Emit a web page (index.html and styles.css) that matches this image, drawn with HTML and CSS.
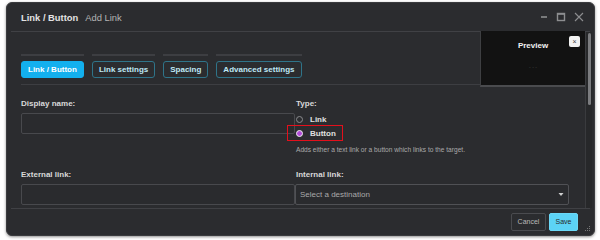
FILE: index.html
```html
<!DOCTYPE html>
<html>
<head>
<meta charset="utf-8">
<link rel="stylesheet" href="styles.css">
</head>
<body>
<div class="dialog">
  <div class="header">
    <span class="title">Link / Button</span>
    <span class="subtitle">Add Link</span>
    <div class="controls">
      <svg width="8" height="10" viewBox="0 0 8 10"><line x1="1" y1="5" x2="7" y2="5" stroke="#8d8e90" stroke-width="1.6"/></svg>
      <svg width="10" height="10" viewBox="0 0 10 10"><rect x="1.5" y="1.5" width="7" height="7" fill="none" stroke="#8d8e90" stroke-width="1.4"/><line x1="1.5" y1="2" x2="8.5" y2="2" stroke="#8d8e90" stroke-width="1.6"/></svg>
      <svg width="10" height="10" viewBox="0 0 10 10"><path d="M1 1 L9 9 M9 1 L1 9" stroke="#8d8e90" stroke-width="1.1"/></svg>
    </div>
  </div>
  <div class="body">
    <div class="scroll">
      <div class="tabs">
        <div class="tab-item"><span class="tab active">Link / Button</span></div>
        <div class="tab-item"><span class="tab">Link settings</span></div>
        <div class="tab-item"><span class="tab">Spacing</span></div>
        <div class="tab-item"><span class="tab">Advanced settings</span></div>
      </div>
      <div class="form">
        <div class="field">
          <div class="label">Display name:</div>
          <div class="input"></div>
        </div>
        <div class="field col2">
          <div class="label">Type:</div>
          <div class="radio-row"><span class="radio"></span><span class="radio-label">Link</span></div>
          <div class="radio-row sel"><span class="radio on"></span><span class="radio-label">Button</span><span class="mark"></span></div>
          <div class="help">Adds either a text link or a button which links to the target.</div>
        </div>
        <div class="field">
          <div class="label">External link:</div>
          <div class="input"></div>
        </div>
        <div class="field col2">
          <div class="label">Internal link:</div>
          <div class="select"><span>Select a destination</span><svg width="6" height="5" viewBox="0 0 6 5"><path d="M0.5 1 L5.5 1 L3 4 Z" fill="#d0d0d0"/></svg></div>
        </div>
      </div>
      <div class="preview">
        <div class="preview-title">Preview</div>
        <span class="preview-close">×</span>
        <div class="preview-dash">- - -</div>
      </div>
    </div>
    <div class="scrollbar"><div class="thumb"></div></div>
  </div>
  <div class="footer">
    <span class="btn cancel">Cancel</span>
    <span class="btn save">Save</span>
    <svg class="grip" width="6" height="6" viewBox="0 0 6 6"><rect x="4" y="0" width="1" height="1" fill="#777"/><rect x="2" y="2" width="1" height="1" fill="#777"/><rect x="4" y="2" width="1" height="1" fill="#777"/><rect x="0" y="4" width="1" height="1" fill="#777"/><rect x="2" y="4" width="1" height="1" fill="#777"/><rect x="4" y="4" width="1" height="1" fill="#777"/></svg>
  </div>
</div>
</body>
</html>
```

FILE: styles.css
```css
* { box-sizing: border-box; }
html, body { margin: 0; padding: 0; background: #ffffff; }
body { font-family: "Liberation Sans", Arial, sans-serif; width: 600px; height: 240px; overflow: hidden; }

.dialog {
  margin: 2px 0 0 6px;
  width: 589px;
  height: 234px;
  background: #2b2c2f;
  border: 1px solid #3a3b3e;
  border-radius: 6px;
  box-shadow: 0 1px 3px rgba(0,0,0,0.45);
  display: flex;
  flex-direction: column;
  position: relative;
}

.header {
  height: 29px;
  margin: 0 4px;
  padding: 0 6px 0 10px;
  border-bottom: 1px solid #404145;
  display: flex;
  align-items: center;
  flex-shrink: 0;
}
.title { font-size: 9.4px; font-weight: bold; color: #e2e2e2; }
.subtitle { font-size: 9.4px; color: #b4b4b4; margin-left: 7px; }
.controls { margin-left: auto; display: flex; align-items: center; gap: 8px; }

.body { display: flex; height: 176px; flex-shrink: 0; }
.scroll {
  flex: 1;
  position: relative;
  padding: 22px 16px 0 14px;
}
.scrollbar {
  width: 7px;
  margin-right: 2px;
  border-left: 1px solid #3a3b3e;
  background: #27282a;
  padding: 0 1px;
}
.thumb { width: 3px; height: 72px; margin: 1px 0 0 1px; background: #7b7c7f; border-radius: 2px; }

.tabs {
  display: flex;
  gap: 8px;
  padding-bottom: 6px;
  border-bottom: 1px solid #3d3e42;
}
.tab-item { border-top: 2px solid #3d3e42; padding-top: 5px; }
.tab {
  display: block;
  height: 17px;
  line-height: 15px;
  padding: 0 6px;
  border: 1px solid #2f7489;
  border-radius: 3px;
  font-size: 8px;
  font-weight: bold;
  color: #bfe8f6;
}
.tab.active { background: #13b0ee; border-color: #13b0ee; color: #ffffff; }

.form {
  display: grid;
  grid-template-columns: 274px 274px;
  row-gap: 15px;
  padding-top: 14px;
}
.field { display: flex; flex-direction: column; align-items: flex-start; }
.col2 .label, .col2 .radio-row, .col2 .help { margin-left: 1px; }
.label { font-size: 8px; font-weight: bold; color: #d9d9d9; height: 10px; line-height: 10px; margin-bottom: 4px; }
.input {
  width: 274px;
  height: 21px;
  border: 1px solid #48494d;
  border-radius: 2px;
  background: #2a2b2e;
}
.radio-row { display: flex; align-items: center; height: 12px; position: relative; }
.radio-row.sel { height: 16px; }
.radio {
  width: 7px; height: 7px;
  border-radius: 50%;
  border: 1px solid #8a8b8e;
  margin-right: 7px;
}
.radio.on { background: #b24bd9; border: 1.5px solid #f0f0f0; }
.radio-label { font-size: 8px; font-weight: bold; color: #e0e0e0; }
.mark {
  position: absolute;
  left: -9px; top: 0;
  width: 56px; height: 16px;
  border: 1.5px solid #e3101c;
}
.help { font-size: 6.6px; color: #aaaaaa; margin-top: 4px; height: 10px; line-height: 10px; }
.select {
  width: 274px;
  height: 21px;
  border: 1px solid #505155;
  border-radius: 2px;
  background: #2a2b2e;
  display: flex;
  align-items: center;
  justify-content: space-between;
  padding: 0 4px 0 4px;
  font-size: 8px;
  color: #a9a9a9;
}

.preview {
  position: absolute;
  top: -1px; right: 0;
  width: 105px; height: 56px;
  background: #121212;
  border-left: 1px solid #3e3f42;
  border-bottom: 2px solid #4a4b4e;
}
.preview-title { text-align: center; font-size: 8px; font-weight: bold; color: #f2f2f2; margin-top: 10px; }
.preview-close {
  position: absolute;
  top: 5px; right: 5px;
  width: 11px; height: 11px;
  background: #f2f2f2;
  border-radius: 2px;
  font-size: 7px;
  line-height: 11px;
  text-align: center;
  color: #444;
}
.preview-dash { text-align: center; font-size: 5px; color: #444; margin-top: 14px; }

.footer {
  margin: 0 4px;
  border-top: 1px solid #404145;
  flex: 1;
  display: flex;
  justify-content: flex-end;
  align-items: flex-start;
  gap: 3px;
  padding: 4px 12px 0 0;
  position: relative;
}
.btn {
  height: 18px;
  line-height: 16px;
  font-size: 7px;
  border-radius: 2px;
  text-align: center;
}
.cancel { width: 35px; border: 1px solid #4a4b4f; color: #b9b9b9; background: #2b2c2f; }
.save { width: 29px; border: 1px solid #6bd8f7; background: #5cd3f6; color: #2a2a2a; }
.grip { position: absolute; right: -1px; bottom: 3px; }
```
